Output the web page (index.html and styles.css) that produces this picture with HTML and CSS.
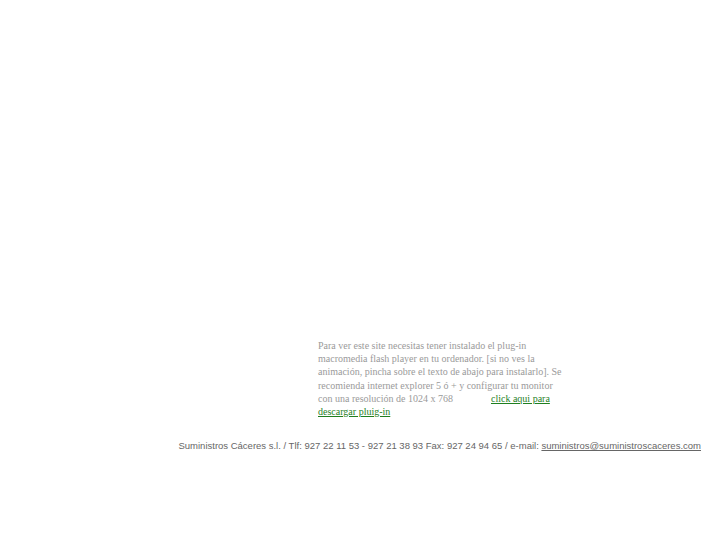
FILE: index.html
```html
<!DOCTYPE html>
<html>
<head>
<meta charset="utf-8">
<link rel="stylesheet" href="styles.css">
</head>
<body>
<div class="page">
  <div class="stage"></div>
  <div class="notice">
    <p class="info">Para ver este site necesitas tener instalado el plug-in macromedia flash player en tu ordenador. [si no ves la animación, pincha sobre el texto de abajo para instalarlo]. Se recomienda internet explorer 5 ó + y configurar tu monitor con una resolución de 1024 x 768<a class="dl" href="#">click aqui para descargar pluig-in</a></p>
  </div>
  <div class="footer">Suministros Cáceres s.l. / Tlf: 927 22 11 53 - 927 21 38 93 Fax: 927 24 94 65 / e-mail: <a class="mail" href="#">suministros@suministroscaceres.com</a></div>
</div>
</body>
</html>
```

FILE: styles.css
```css
html, body {
  margin: 0;
  padding: 0;
  background: #ffffff;
}
.page {
  display: flex;
  flex-direction: column;
  width: 727px;
}
.stage {
  height: 339px;
}
.notice {
  padding-left: 318px;
}
.info {
  margin: 0;
  width: 245px;
  font-family: "Liberation Serif", "Times New Roman", serif;
  font-size: 10px;
  line-height: 13.2px;
  color: #9a9a9a;
}
.dl {
  margin-left: 38px;
  color: #1f7f1f;
  text-decoration: underline;
}
.footer {
  margin-top: 22px;
  padding-right: 26px;
  text-align: right;
  font-family: "Liberation Sans", Arial, sans-serif;
  font-size: 9.5px;
  line-height: 12px;
  color: #666666;
}
.mail {
  color: #666666;
  text-decoration: underline;
}
```
